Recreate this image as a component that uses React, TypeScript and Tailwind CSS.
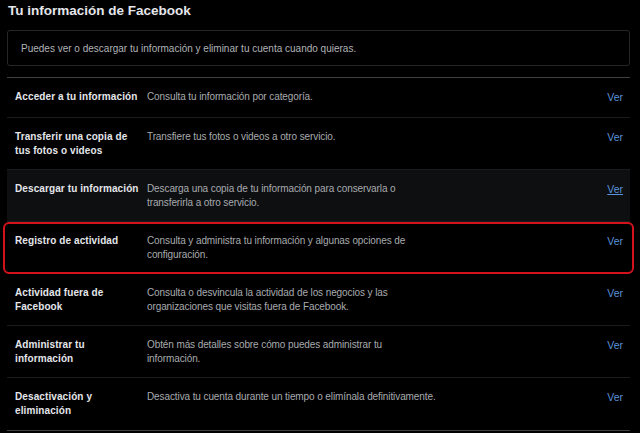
import React from 'react';

interface Item {
  label: string[];
  desc: string[];
  highlight?: boolean;
  marked?: boolean;
}

const items: Item[] = [
  { label: ['Acceder a tu información'], desc: ['Consulta tu información por categoría.'] },
  { label: ['Transferir una copia de', 'tus fotos o videos'], desc: ['Transfiere tus fotos o videos a otro servicio.'] },
  {
    label: ['Descargar tu información'],
    desc: ['Descarga una copia de tu información para conservarla o', 'transferirla a otro servicio.'],
    highlight: true,
  },
  {
    label: ['Registro de actividad'],
    desc: ['Consulta y administra tu información y algunas opciones de', 'configuración.'],
    marked: true,
  },
  {
    label: ['Actividad fuera de', 'Facebook'],
    desc: ['Consulta o desvincula la actividad de los negocios y las', 'organizaciones que visitas fuera de Facebook.'],
  },
  {
    label: ['Administrar tu', 'información'],
    desc: ['Obtén más detalles sobre cómo puedes administrar tu', 'información.'],
  },
  { label: ['Desactivación y', 'eliminación'], desc: ['Desactiva tu cuenta durante un tiempo o elimínala definitivamente.'] },
];

const Row: React.FC<{ item: Item; last: boolean }> = ({ item, last }) => {
  const single = item.label.length === 1 && item.desc.length === 1;
  const base = single ? 'h-[40px]' : 'h-[52px]';
  return (
    <div
      className={
        item.marked
          ? `-mx-[4px] ${base} flex items-start rounded-[6px] border-2 border-[#d3121c] pl-[10px] pr-[9px] pt-[10px]`
          : `${base} flex items-start pl-[8px] pr-[7px] pt-[12px] ${item.highlight ? 'bg-[#0e0f11]' : ''} ${last ? '' : 'border-b border-[#1a1b1d]'}`
      }
    >
      <div className="w-[132px] shrink-0 whitespace-nowrap text-[10px] font-bold leading-[14px] tracking-[0.1px] text-[#e4e6eb]">
        {item.label.map((l) => (
          <div key={l}>{l}</div>
        ))}
      </div>
      <div className="flex-1 whitespace-nowrap text-[10px] leading-[14px] tracking-[-0.1px] text-[#a8abaf]">
        {item.desc.map((d) => (
          <div key={d}>{d}</div>
        ))}
      </div>
      <span className={`text-[10.5px] leading-[14px] text-[#5b93db] ${item.highlight ? 'underline' : ''}`}>Ver</span>
    </div>
  );
};

export default function App() {
  return (
    <div className="h-[433px] w-[640px] overflow-hidden bg-black font-['Liberation_Sans',Arial,sans-serif]">
      <div className="px-[7px] pt-[1px]">
        <h1 className="pl-[1px] text-[13.5px] font-bold leading-[20px] text-[#e4e6eb]">Tu información de Facebook</h1>
        <div className="mt-[9px] flex h-[36px] w-[623px] items-center rounded-[3px] border border-[#25262a] pl-[13px] text-[10px] text-[#b0b3b8]">
          Puedes ver o descargar tu información y eliminar tu cuenta cuando quieras.
        </div>
        <div className="mt-[11px] w-[623px] border-t border-[#3e4042]">
          {items.map((it, i) => (
            <Row key={it.label[0]} item={it} last={i === items.length - 1} />
          ))}
          <div className="border-t border-[#3e4042]" />
        </div>
      </div>
    </div>
  );
}
